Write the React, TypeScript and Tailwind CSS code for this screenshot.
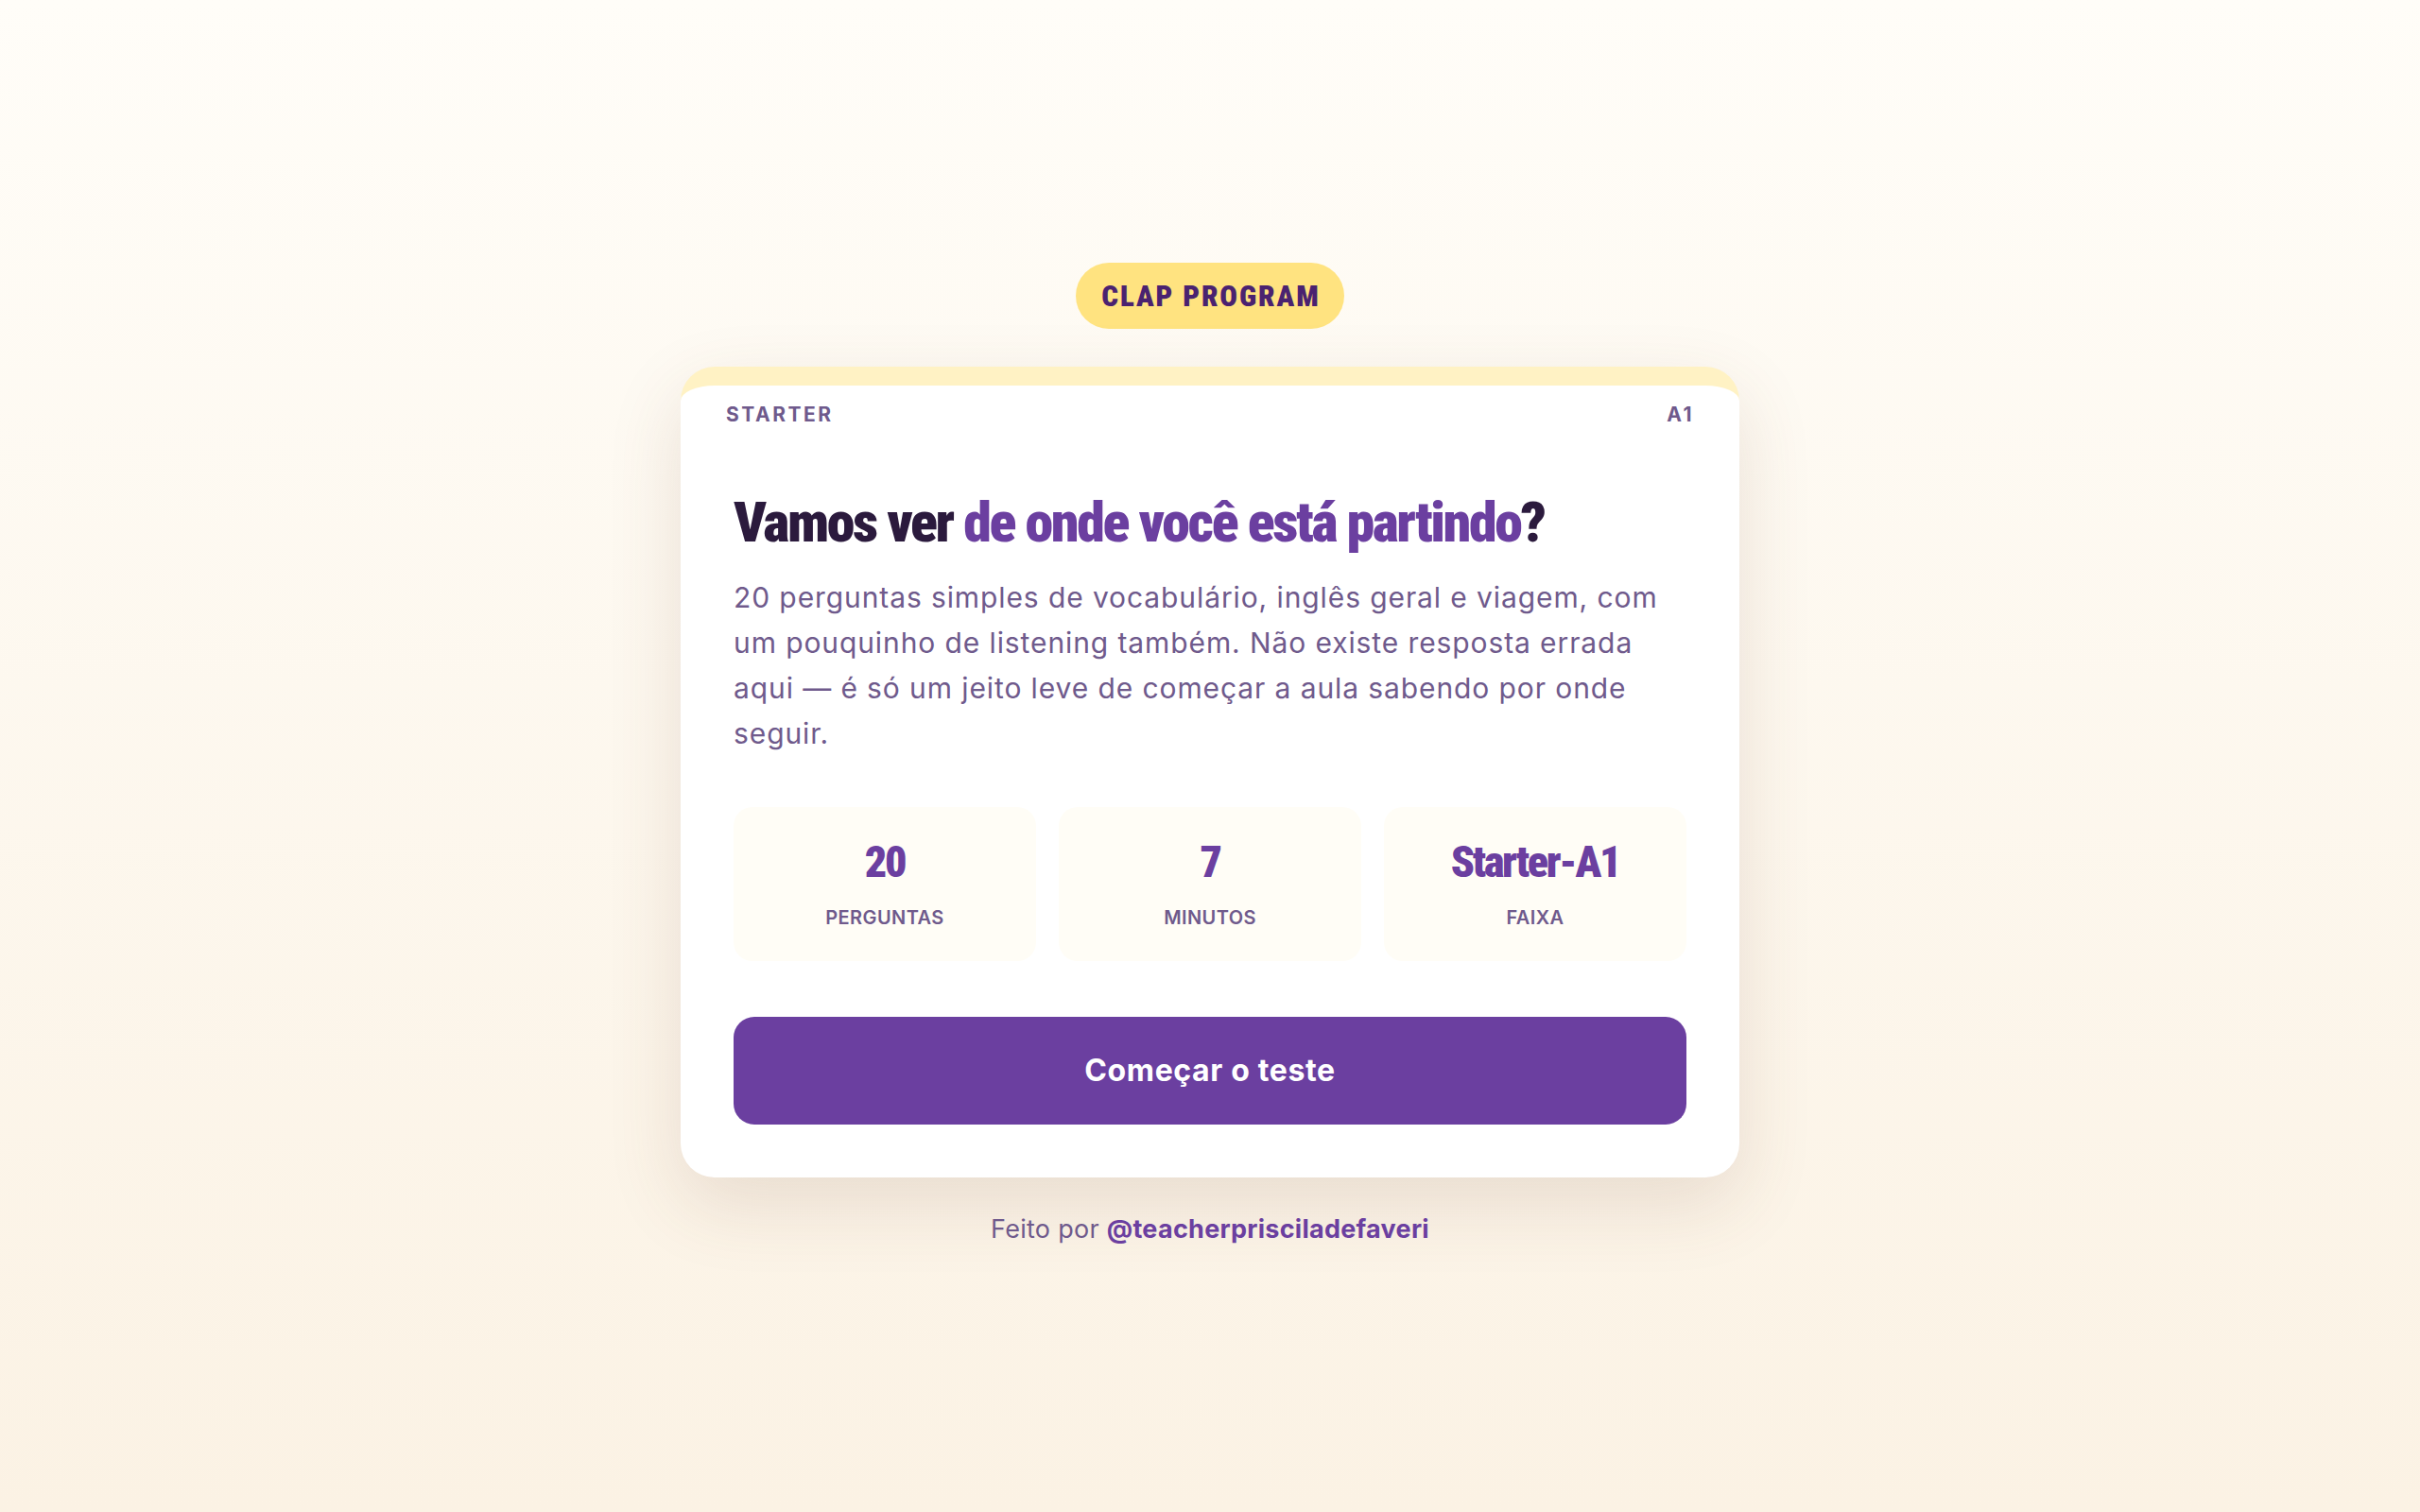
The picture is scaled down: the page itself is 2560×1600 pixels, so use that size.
const display = { fontFamily: 'Roboto, "Noto Sans", sans-serif' };
const body = { fontFamily: 'Inter, "Noto Sans", sans-serif' };

const stats = [
  { value: '20', label: 'PERGUNTAS' },
  { value: '7', label: 'MINUTOS' },
  { value: 'Starter-A1', label: 'FAIXA' },
];

export default function App() {
  return (
    <div
      className="min-h-screen bg-gradient-to-b from-[#fffdf8] to-[#fbf2e4] flex flex-col items-center pt-[278px] pb-20"
      style={body}
    >
      {/* program badge */}
      <div className="h-[70px] w-[284px] rounded-full bg-[#ffe380] flex items-center justify-center">
        <span
          className="text-[31px] leading-none font-black font-stretch-condensed tracking-[0.06em] text-[#4a2270] pl-[0.06em]"
          style={display}
        >
          CLAP PROGRAM
        </span>
      </div>

      {/* main card */}
      <div className="mt-10 w-[1120px] bg-white rounded-[36px] border-t-[20px] border-[#fff2c4] shadow-[0_28px_80px_rgba(110,70,50,0.14)]">
        <div className="flex justify-between px-12 pt-[17px] text-[21px] leading-[28px] font-bold tracking-[0.12em] text-[#6f5a8c]">
          <span>STARTER</span>
          <span>A1</span>
        </div>

        <div className="px-14 pb-14">
          <h1
            className="mt-16 text-[60px] leading-[72px] font-black font-stretch-condensed tracking-[-0.04em] text-[#2b1a3d]"
            style={display}
          >
            Vamos ver <span className="text-[#6b3fa0]">de onde você está partindo</span>?
          </h1>

          <p className="mt-[19px] text-[30px] leading-[48px] tracking-[0.03em] text-[#6f5a8c]">
            20 perguntas simples de vocabulário, inglês geral e viagem, com um pouquinho de listening
            também. Não existe resposta errada aqui — é só um jeito leve de começar a aula sabendo por
            onde seguir.
          </p>

          <div className="mt-[54px] grid grid-cols-3 gap-6">
            {stats.map((s) => (
              <div
                key={s.label}
                className="h-[163px] rounded-[20px] bg-[#fffdf6] flex flex-col items-center pt-[35px]"
              >
                <span
                  className="text-[46px] leading-[46px] font-black font-stretch-condensed tracking-[-0.05em] text-[#6b3fa0]"
                  style={display}
                >
                  {s.value}
                </span>
                <span className="mt-6 text-[20px] leading-[24px] font-semibold tracking-[0.02em] text-[#6f5a8c]">
                  {s.label}
                </span>
              </div>
            ))}
          </div>

          <button className="mt-[59px] w-full h-[114px] rounded-[22px] bg-[#6b3fa0] text-white text-[32px] font-bold tracking-[0.02em]">
            Começar o teste
          </button>
        </div>
      </div>

      <p className="mt-[38px] text-[27px] leading-[34px] tracking-[0.01em] text-[#6f5a8c]">
        Feito por <span className="font-bold text-[#6b3fa0]">@teacherprisciladefaveri</span>
      </p>
    </div>
  );
}
